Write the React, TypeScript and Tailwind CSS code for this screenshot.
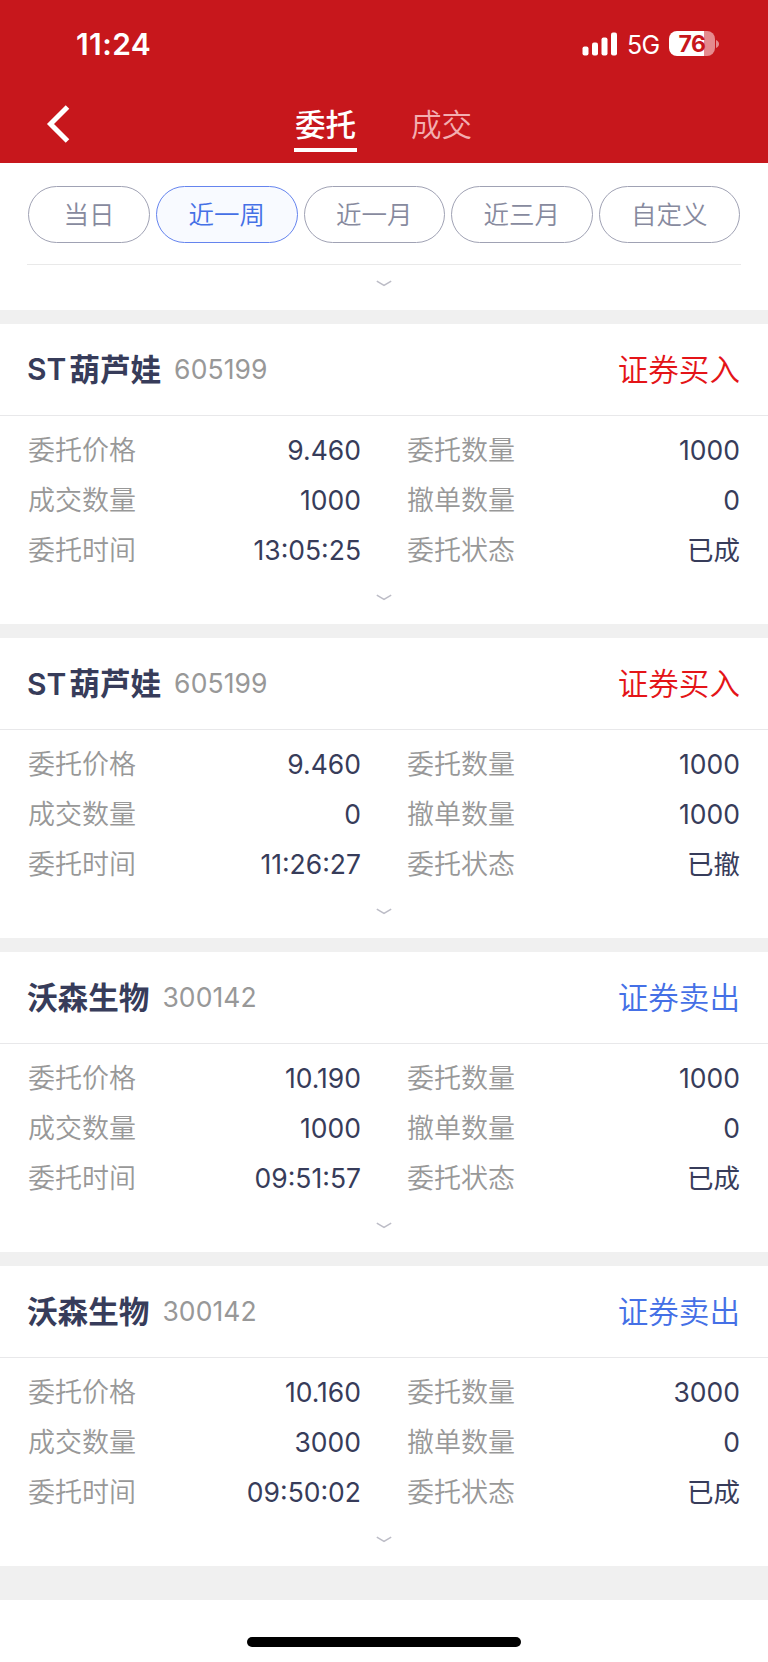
import React from 'react';

type Order = {
  name: string;
  prefix?: string;
  code: string;
  side: 'buy' | 'sell';
  price: string;
  amount: string;
  filled: string;
  cancelled: string;
  time: string;
  status: string;
};

const orders: Order[] = [
  { prefix: 'ST', name: '葫芦娃', code: '605199', side: 'buy', price: '9.460', amount: '1000', filled: '1000', cancelled: '0', time: '13:05:25', status: '已成' },
  { prefix: 'ST', name: '葫芦娃', code: '605199', side: 'buy', price: '9.460', amount: '1000', filled: '0', cancelled: '1000', time: '11:26:27', status: '已撤' },
  { name: '沃森生物', code: '300142', side: 'sell', price: '10.190', amount: '1000', filled: '1000', cancelled: '0', time: '09:51:57', status: '已成' },
  { name: '沃森生物', code: '300142', side: 'sell', price: '10.160', amount: '3000', filled: '3000', cancelled: '0', time: '09:50:02', status: '已成' },
];

const ranges = ['当日', '近一周', '近一月', '近三月', '自定义'];

function ChevronDown() {
  return (
    <svg className="w-4 h-2 shrink-0" viewBox="0 0 16 8" fill="none" stroke="#bcbcc6" strokeWidth="1.5">
      <path d="M0.8 1.2 L8 5.4 L15.2 1.2" />
    </svg>
  );
}

function StatusBar() {
  return (
    <div className="h-[86px] flex items-center justify-between pl-[76px] pr-[49px]">
      <span className="text-[30px] leading-9 font-semibold tracking-[0.4px] pt-[2px]">11:24</span>
      <div className="flex items-center pt-[1px]">
        <svg className="w-[36px] h-[24px]" viewBox="0 0 36 24" fill="#fff">
          <rect x="0.5" y="14.5" width="6" height="9" rx="2" />
          <rect x="10" y="10.5" width="6" height="13" rx="2" />
          <rect x="19.5" y="5.5" width="6" height="18" rx="2" />
          <rect x="29" y="0.5" width="6" height="23" rx="2" />
        </svg>
        <span className="ml-[9px] w-[34px] pt-[2px] text-[25px] leading-7 tracking-[-0.6px] font-normal">5G</span>
        <div className="ml-[8px] w-[46px] h-[25px] rounded-[8px] bg-[linear-gradient(to_right,#fff_76%,#e58b8e_76%)] text-center text-[23px] leading-[26px] font-bold tracking-[-0.4px] text-[#c7171c]">
          76
        </div>
        <svg className="ml-[1px] w-[3px] h-[8px]" viewBox="0 0 3 8" fill="#e58b8e">
          <path d="M0 0 C4 1.5 4 6.5 0 8 Z" />
        </svg>
      </div>
    </div>
  );
}

function Field({ label, value }: { label: string; value: string }) {
  return (
    <div className="flex items-center justify-between h-[50px]">
      <span className="text-[27px] font-[350] text-[#989898]">{label}</span>
      <span className="text-[26.5px] text-[#373c5a]">{value}</span>
    </div>
  );
}

function OrderCard({ order }: { order: Order }) {
  return (
    <div className="h-[314.1px] pt-[14px] bg-[#f0f0f0]">
      <div className="h-full bg-white flex flex-col items-center">
        <div className="w-full h-[92px] shrink-0 flex items-center justify-between pt-[1px] pl-[27px] pr-[28px] border-b border-[#e8e8ea]">
          <div className="flex items-center">
            {order.prefix && <span className="mr-[3px] text-[30px] font-semibold text-[#373c5a]">{order.prefix}</span>}
            <span className="text-[30.6px] font-bold text-[#373c5a]">{order.name}</span>
            <span className="ml-[13px] text-[26.5px] text-[#989898] tracking-[0.1px]">{order.code}</span>
          </div>
          <span className={`text-[30.6px] font-[350] ${order.side === 'buy' ? 'text-[#e41418]' : 'text-[#4570e6]'}`}>
            {order.side === 'buy' ? '证券买入' : '证券卖出'}
          </span>
        </div>
        <div className="w-full grid grid-cols-[333px_333px] justify-between pl-[28px] pr-[28px] pt-[10px]">
          <Field label="委托价格" value={order.price} />
          <Field label="委托数量" value={order.amount} />
          <Field label="成交数量" value={order.filled} />
          <Field label="撤单数量" value={order.cancelled} />
          <Field label="委托时间" value={order.time} />
          <Field label="委托状态" value={order.status} />
        </div>
        <div className="mt-[18px]">
          <ChevronDown />
        </div>
      </div>
    </div>
  );
}

export default function App() {
  return (
    <div className="w-[768px] h-[1662px] overflow-hidden bg-white font-['Inter','Noto_Sans_CJK_SC',sans-serif] flex flex-col">
      <header className="h-[163px] shrink-0 bg-[#c7171c] text-white">
        <StatusBar />
        <div className="h-[77px] flex">
          <button className="w-[294px] pl-[46px] pt-[18px] flex items-start">
            <svg className="w-[24px] h-[40px]" viewBox="0 0 24 40" fill="none" stroke="#fff" strokeWidth="5">
              <path d="M21.5 3 L4.5 20 L21.5 37" />
            </svg>
          </button>
          <div className="w-[63px] h-[66px] flex flex-col items-center justify-between border-b-4 border-white">
            <span className="pt-[21px] text-[30.6px] leading-9 font-medium">委托</span>
          </div>
          <span className="ml-[54px] pt-[21px] text-[30.6px] leading-9 font-[350] text-[#f3aeb0]">成交</span>
        </div>
      </header>

      <div className="h-[147px] shrink-0 flex flex-col items-center px-[27px] pt-[23px]">
        <div className="w-full flex gap-[6px] px-[1px]">
          {ranges.map((range, i) => (
            <button
              key={range}
              className={`h-[57px] pt-[1px] rounded-full border text-[25.5px] font-[350] ${i === 0 ? 'w-[122px] shrink-0' : 'flex-1'} ${
                i === 1 ? 'border-[#6584ee] bg-[#f8faff] text-[#4570e6]' : 'border-[#a0a2b4] text-[#878a9e]'
              }`}
            >
              {range}
            </button>
          ))}
        </div>
        <div className="w-full mt-[21px] mb-[15px] border-t border-[#e9e9e9]" />
        <ChevronDown />
      </div>

      {orders.map((order, i) => (
        <OrderCard key={i} order={order} />
      ))}

      <div className="h-[34px] shrink-0 bg-[#f0f0f0]" />
      <div className="flex-1 pt-[37px] flex justify-center items-start">
        <div className="w-[274px] h-[10px] rounded-full bg-black" />
      </div>
    </div>
  );
}
